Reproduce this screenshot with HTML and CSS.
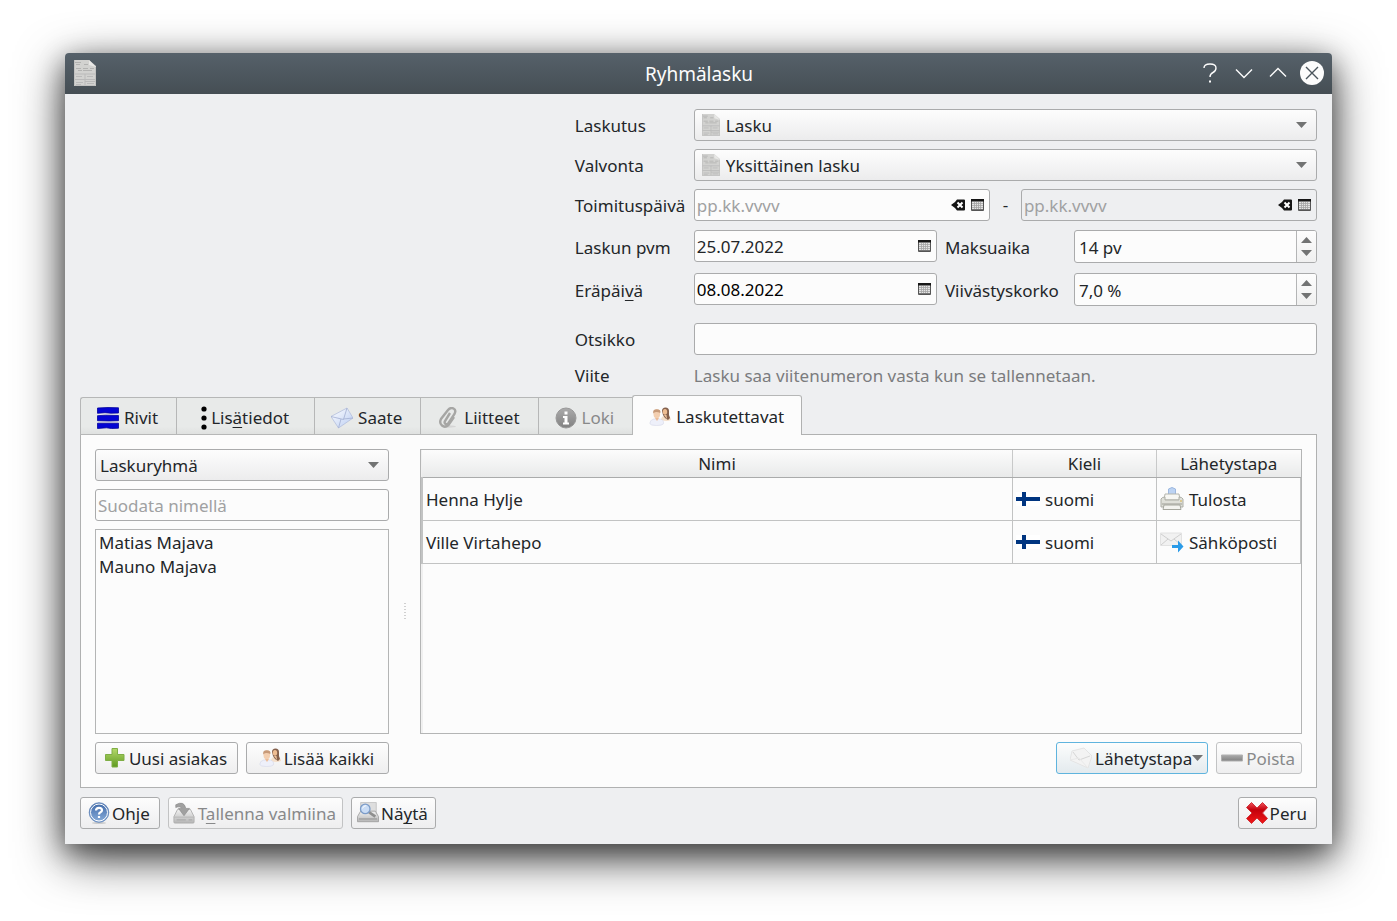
FILE: index.html
```html
<!DOCTYPE html>
<html lang="fi">
<head>
<meta charset="utf-8">
<title>Ryhmälasku</title>
<link rel="stylesheet" href="styles.css">
</head>
<body>
<svg class="defs" aria-hidden="true">
  <defs>
    <linearGradient id="gGreen" x1="0" y1="0" x2="0" y2="1"><stop offset="0" stop-color="#b5d96b"/><stop offset="1" stop-color="#5f9a20"/></linearGradient>
    <linearGradient id="gBlue" x1="0" y1="0" x2="0" y2="1"><stop offset="0" stop-color="#3e68a8"/><stop offset="1" stop-color="#8aaedb"/></linearGradient>
    <linearGradient id="gGrey" x1="0" y1="0" x2="0" y2="1"><stop offset="0" stop-color="#ababab"/><stop offset="1" stop-color="#818181"/></linearGradient>
    <linearGradient id="gRed" x1="0" y1="0" x2="0" y2="1"><stop offset="0" stop-color="#f0525c"/><stop offset=".35" stop-color="#c4000c"/><stop offset="1" stop-color="#f01818"/></linearGradient>
    <linearGradient id="gMail" x1="0" y1="0" x2="1" y2="1"><stop offset="0" stop-color="#ffffff"/><stop offset="1" stop-color="#b9ccf2"/></linearGradient>
    <linearGradient id="gBox" x1="0" y1="0" x2="0" y2="1"><stop offset="0" stop-color="#f2f2f2"/><stop offset="1" stop-color="#b5b5b5"/></linearGradient>
    <symbol id="doc" viewBox="0 0 22 26" preserveAspectRatio="none">
      <path d="M0 0h15l7 6v20H0z" fill="#d2d2d0"/><path d="M15 0v5l7 2z" fill="#e8e8e6"/>
      <path d="M1 2.500h6M2 4.500h4M10 4.500h4M2 8.500h5M4 10.500h4M9 8.500h5M16 8.500h4M9 10.500h9" stroke="#b2b2b1" fill="none"/>
      <path d="M0 14h22M0 19.500h22M11 14v11M11 21.500h10M2 16.500h6M13 16.500h6M2 22.500h7M2 24.500h5M13 23.500h7" stroke="#bababa" fill="none"/>
      <path d="M.5 0v25.500h21V7" stroke="#c2c2c1" fill="none"/>
    </symbol>
    <symbol id="cal" viewBox="0 0 13 12">
      <path d="M.5 .5h12v11H.5z" fill="#e4e4e4" stroke="#555"/><path d="M0 0h13v2.500H0z" fill="#161616"/>
      <path d="M1 4.500h11M1 6.500h11M1 8.500h11M3.500 3v8M5.500 3v8M7.500 3v8M9.500 3v8" stroke="#a4a4a4" stroke-width=".8"/><path d="M1 10.500h11" stroke="#777"/>
    </symbol>
    <symbol id="clear" viewBox="0 0 14 12">
      <path d="M6 .5h7q1 0 1 1v9q0 1-1 1H6L4 9 0 6l4-3z" fill="#151515"/><path d="M6.500 3.500l5 5M11.500 3.500l-5 5" stroke="#fff" stroke-width="2"/>
    </symbol>
    <symbol id="down" viewBox="0 0 11 6"><path d="M0 0h11L5.500 6z" fill="#727373"/></symbol>
    <symbol id="up" viewBox="0 0 11 6"><path d="M0 6h11L5.500 0z" fill="#727373"/></symbol>
    <symbol id="people" viewBox="0 0 22 20">
      <path d="M12 13q0-4 5-5 5 1 5 5-4 2-10 0z" fill="#f4dfca"/>
      <path d="M13 4q0-3.500 3.500-3.500T20 4v4l1 3-2 2-3-2-2-3z" fill="#84604c"/><ellipse cx="16" cy="4.800" rx="2.200" ry="2.900" fill="#eebd92"/><path d="M15 8h2.500l.5 4z" fill="#f0c49c"/>
      <path d="M.8 16.500q0-3.500 4-4.500h6.500q4 1 3 5-1 1.500-7 1.500t-6.500-2z" fill="#eef0fa" stroke="#d5d7e8" stroke-width=".6"/>
      <ellipse cx="7.800" cy="7" rx="3.300" ry="4.400" fill="#f3cfb0"/><path d="M4.300 6.500q-1-4.300 3.500-4.300t3.500 3.800q-3-1.600-5.500-.8z" fill="#c79a78"/><path d="M6 11h4l-2 3z" fill="#edbd98"/>
    </symbol>
    <symbol id="flag" viewBox="0 0 24 14"><path d="M0 0h24v14H0z" fill="#fff"/><path d="M0 5h24v4H0zM6 0h4v14H6z" fill="#003580"/></symbol>
  </defs>
</svg>

<main class="window">
  <header class="titlebar">
    <svg class="app-icon"><use href="#doc"/></svg>
    <h1>Ryhmälasku</h1>
    <div class="controls">
      <button type="button" aria-label="Ohje"><svg viewBox="0 0 24 24"><path d="M6 7q0-4 6-4t6 4q0 3-3 4.500t-3 4.500" /><path d="M12 19.500v2" stroke-width="2"/></svg></button>
      <button type="button" aria-label="Pienennä"><svg viewBox="0 0 24 24"><path d="M4 8.500l8 8 8-8"/></svg></button>
      <button type="button" aria-label="Suurenna"><svg viewBox="0 0 24 24"><path d="M4 15.500l8-8 8 8"/></svg></button>
      <button type="button" aria-label="Sulje" class="close"><svg viewBox="0 0 24 24"><path d="M6 6l12 12M18 6L6 18"/></svg></button>
    </div>
  </header>

  <div class="content">
    <form class="form">
      <label for="laskutus">Laskutus</label>
      <div class="combo with-icon">
        <svg class="lead"><use href="#doc"/></svg>
        <select id="laskutus"><option>Lasku</option></select>
        <svg class="arrow"><use href="#down"/></svg>
      </div>

      <label for="valvonta">Valvonta</label>
      <div class="combo with-icon">
        <svg class="lead"><use href="#doc"/></svg>
        <select id="valvonta"><option>Yksittäinen lasku</option></select>
        <svg class="arrow"><use href="#down"/></svg>
      </div>

      <label for="toimitus">Toimituspäivä</label>
      <div class="range">
        <div class="field"><input id="toimitus" type="text" placeholder="pp.kk.vvvv"><button type="button" aria-label="Tyhjennä"><svg class="clear"><use href="#clear"/></svg></button><button type="button" aria-label="Kalenteri"><svg class="cal"><use href="#cal"/></svg></button></div>
        <span class="dash">-</span>
        <div class="field off"><input type="text" placeholder="pp.kk.vvvv" aria-label="Toimituspäivä päättyy" disabled><button type="button" aria-label="Tyhjennä"><svg class="clear"><use href="#clear"/></svg></button><button type="button" aria-label="Kalenteri"><svg class="cal"><use href="#cal"/></svg></button></div>
      </div>

      <label for="pvm">Laskun pvm</label>
      <div class="pair">
        <div class="field"><input id="pvm" type="text" value="25.07.2022"><button type="button" aria-label="Kalenteri"><svg class="cal"><use href="#cal"/></svg></button></div>
        <label for="maksuaika">Maksuaika</label>
        <div class="spin"><input id="maksuaika" type="text" value="14 pv"><div class="steps"><button type="button" aria-label="Lisää"><svg><use href="#up"/></svg></button><button type="button" aria-label="Vähennä"><svg><use href="#down"/></svg></button></div></div>
      </div>

      <label for="erapaiva">Eräpäi<u>v</u>ä</label>
      <div class="pair">
        <div class="field strong"><input id="erapaiva" type="text" value="08.08.2022"><button type="button" aria-label="Kalenteri"><svg class="cal"><use href="#cal"/></svg></button></div>
        <label for="korko">Viivästyskorko</label>
        <div class="spin"><input id="korko" type="text" value="7,0 %"><div class="steps"><button type="button" aria-label="Lisää"><svg><use href="#up"/></svg></button><button type="button" aria-label="Vähennä"><svg><use href="#down"/></svg></button></div></div>
      </div>

      <label for="otsikko" class="spaced">Otsikko</label>
      <div class="field spaced"><input id="otsikko" type="text"></div>

      <span>Viite</span>
      <output class="hint">Lasku saa viitenumeron vasta kun se tallennetaan.</output>
    </form>

    <div class="tabs" role="tablist">
      <button type="button" role="tab" class="tab"><svg class="i22" viewBox="0 0 22 22"><path d="M.5 1l10.500-.5 10.500.3v5.200L14 6.200 8 5.700.5 6.300zM.5 8.700l8-.5 13 .3v5.200l-9 .3-12-.3zM.5 16.200h21v5l-7 .3-5-.7-9 .7z" fill="#0404d4" stroke="#02029c" stroke-width=".8"/></svg>Rivit</button>
      <button type="button" role="tab" class="tab dots"><svg viewBox="0 0 6 24"><circle cx="3" cy="3" r="2.600"/><circle cx="3" cy="12" r="2.600"/><circle cx="3" cy="21" r="2.600"/></svg><span>Lis<u>ä</u>tiedot</span></button>
      <button type="button" role="tab" class="tab"><svg class="i22" viewBox="0 0 22 22"><path d="M0 9.500L16 1l6 10L7.500 21z" fill="url(#gMail)" stroke="#b4bfdc" stroke-width=".8"/><path d="M0 9.500l12.500 3L16 1M7.500 21l2.500-9M22 11l-9.500 1" fill="none" stroke="#a2aed2" stroke-width=".8"/></svg>Saate</button>
      <button type="button" role="tab" class="tab"><svg class="i22" viewBox="0 0 22 22"><ellipse cx="12" cy="19.500" rx="7" ry="1.200" fill="#d5d5d5"/><path d="M13 6L8 14q-1 2 .5 3t3-1l6-9q2-4-1-5.500T11 3L4 12q-2 4 1 6.500t6.500-.5L17 10" fill="none" stroke="#a6a6a4" stroke-width="2.400"/></svg>Liitteet</button>
      <button type="button" role="tab" class="tab" disabled><svg class="i22" viewBox="0 0 22 22"><circle cx="11" cy="11" r="10" fill="url(#gGrey)" stroke="#999"/><path d="M9.500 4.500h3v3h-3zM8 9h4.500v6.500H14v2H8v-2h1.500V11H8z" fill="#fff"/></svg>Loki</button>
      <button type="button" role="tab" class="tab active" aria-selected="true"><svg class="i22"><use href="#people"/></svg>Laskutettavat</button>
    </div>

    <section class="panel" role="tabpanel">
      <div class="side">
        <div class="combo">
          <select aria-label="Ryhmittely"><option>Laskuryhmä</option></select>
          <svg class="arrow"><use href="#down"/></svg>
        </div>
        <div class="field"><input type="text" placeholder="Suodata nimellä" aria-label="Suodata nimellä"></div>
        <ul class="list"><li>Matias Majava</li><li>Mauno Majava</li></ul>
        <div class="row grow">
          <button type="button" class="btn"><svg class="i22" viewBox="0 0 22 22"><path d="M8 1.500h5.500v6H20v6h-6.500v6.500H8v-6.500H1.500v-6H8z" fill="url(#gGreen)" stroke="#7fae45"/></svg>Uusi asiakas</button>
          <button type="button" class="btn"><svg class="i22"><use href="#people"/></svg>Lisää kaikki</button>
        </div>
      </div>
      <div class="splitter"></div>
      <div class="side">
        <div class="grid">
          <table>
            <colgroup><col><col class="c-std"><col class="c-std"></colgroup>
            <thead><tr><th>Nimi</th><th>Kieli</th><th>Lähetystapa</th></tr></thead>
            <tbody>
              <tr><td>Henna Hylje</td><td><div class="cell"><svg class="flag"><use href="#flag"/></svg>suomi</div></td>
                <td><div class="cell"><svg class="i24" viewBox="0 0 24 24"><path d="M8.500 8V2q3.500-3 7 0v6z" fill="#bcd3f3" stroke="#9db8df"/><path d="M5 7h14l1 6H4z" fill="#f7f7f3" stroke="#b4b5ad"/><path d="M1 12q1-2 4-2v3h14v-3q3 0 4 2v8H1z" fill="#dfe0d9" stroke="#adaea6"/><path d="M2 17h20" stroke="#9c9d95"/><path d="M4 18h16l1 4.500H3z" fill="#f3f3ef" stroke="#a6a79e"/><path d="M20 14h2" stroke="#d8b24a"/></svg>Tulosta</div></td></tr>
              <tr><td>Ville Virtahepo</td><td><div class="cell"><svg class="flag"><use href="#flag"/></svg>suomi</div></td>
                <td><div class="cell"><svg class="i24" viewBox="0 0 24 24"><path d="M.5 3h21v12.500H.5z" fill="#f1f1f1" stroke="#e2e2e2"/><path d="M1 4l10 7 10-7M1 15l7-6M21 15l-7-6" fill="none" stroke="#cfcfcf"/><path d="M12 15h6v-4.500l5.500 6-5.500 6V18h-6z" fill="#2a9be8"/></svg>Sähköposti</div></td></tr>
            </tbody>
          </table>
        </div>
        <div class="row end">
          <button type="button" class="btn focus"><svg class="i22" viewBox="0 0 22 22"><path d="M0 13L2 4 14 1l8 8-4 12z" fill="#f3f3f3" stroke="#e4e4e4"/><path d="M3 5l6 8 11-4" fill="none" stroke="#d6d6d6"/><path d="M0 13l9-2 9 10" fill="none" stroke="#e8e8e8"/></svg>Lähetystapa<svg class="menu-arrow"><use href="#down"/></svg></button>
          <button type="button" class="btn" disabled><svg class="i22" viewBox="0 0 22 22"><path d="M.5 8h21v6H.5z" fill="url(#gGrey)" stroke="#b0b0b0"/></svg>Poista</button>
        </div>
      </div>
    </section>

    <footer class="row actions">
      <button type="button" class="btn tight"><svg class="i22" viewBox="0 0 22 22"><ellipse cx="11" cy="21" rx="7" ry="1" fill="#ccc"/><circle cx="11" cy="10.500" r="9.800" fill="url(#gBlue)" stroke="#5d81b6" stroke-width=".8"/><circle cx="11" cy="10.500" r="8.500" fill="none" stroke="#fff"/><path d="M8 8.500Q8 5.800 11 5.800t3 2.400q0 1.300-1.500 2T11 12.500M11 14v2" fill="none" stroke="#fff" stroke-width="2.200"/></svg>Ohje</button>
      <button type="button" class="btn" disabled><svg class="i22" viewBox="0 0 24 24"><path d="M5 8h14l4 8v6q0 1-1 1H2q-1 0-1-1v-6z" fill="url(#gBox)" stroke="#b0b0b0"/><path d="M1 16.500h22" stroke="#b4b4b4"/><path d="M4 19.500h10M17 19.500h4" stroke="#a4a4a4"/><path d="M3 3q9-5 11 4h4l-6 8-6-8h3.500Q8 4 3 6z" fill="#a0a0a0" stroke="#8d8d8d" stroke-width=".7"/></svg><span>T<u>a</u>llenna valmiina</span></button>
      <button type="button" class="btn narrow"><svg class="i22" viewBox="0 0 24 24"><path d="M4 .5h17v13H4z" fill="#dedede" stroke="#c4c4c4"/><path d="M4 10h16l3.500 6v5.500h-23V16z" fill="url(#gBox)" stroke="#a2a2a2"/><path d="M2 18.500h20" stroke="#8d8d8d"/><path d="M13 11l7 5" stroke="#8f8f8f" stroke-width="3"/><circle cx="9" cy="7.500" r="5.200" fill="#c9dcf5" stroke="#7c9cc8" stroke-width="1.400"/><path d="M6 7q1-3 4-3" stroke="#fff" fill="none"/></svg><span>Nä<u>y</u>tä</span></button>
      <button type="button" class="btn tight last"><svg class="i22" viewBox="0 0 22 22"><path d="M5.500.5L11 6 16.500.5l5 5L16.500 11l5 5.500-5 5L11 16l-5.500 5.500-5-5L6 11 .5 5.500z" fill="url(#gRed)" stroke="#d0323a" stroke-linejoin="round"/></svg>Peru</button>
    </footer>
  </div>
</main>
</body>
</html>
```
FILE: styles.css
```css
* { box-sizing: border-box; }

body {
  margin: 0;
  min-height: 100vh;
  padding: 53px 65px 77px;
  display: flex;
  background: #fff;
  color: #232629;
  font: 17px/24px "Noto Sans", sans-serif;
}

input, select, button { font: inherit; color: inherit; margin: 0; }
button { padding: 0; border: 0; background: none; }
svg { display: block; flex: none; }
u { text-underline-offset: 3px; text-decoration-thickness: 1px; text-decoration-skip-ink: none; }
.defs { position: absolute; width: 0; height: 0; }

.window {
  flex: 1;
  min-width: 0;
  display: flex;
  flex-direction: column;
  background: #eeeff1;
  border-radius: 4px 4px 0 0;
  box-shadow: 0 14px 48px rgba(0, 0, 0, .7), 0 8px 26px rgba(0, 0, 0, .4);
}

/* Title bar */
.titlebar {
  height: 41px;
  padding: 0 8px 2px 9px;
  display: grid;
  grid-template-columns: 1fr auto 1fr;
  align-items: center;
  border-radius: 4px 4px 0 0;
  background: linear-gradient(#56616a, #454e54);
  color: #fcfcfc;
}
.titlebar h1 { margin: 0; padding-top: 2px; font-size: 19px; font-weight: 400; }
.app-icon { width: 22px; height: 26px; }
.controls { display: flex; justify-content: flex-end; gap: 10px; }
.controls svg { width: 24px; height: 24px; fill: none; stroke: #fcfcfc; stroke-width: 1.4; }
.controls .close { border-radius: 50%; background: #fcfcfc; }
.controls .close svg { stroke: #4b555c; }

.content { flex: 1; display: flex; flex-direction: column; padding: 15px; }

/* Invoice form */
.form {
  width: 60%;
  margin-left: auto;
  display: grid;
  grid-template-columns: 111px 1fr;
  gap: 8px;
  align-items: center;
}
.form > label { padding-top: 2px; white-space: nowrap; }
.form .spaced { margin-top: 8px; }
.hint { color: #7b7c7e; line-height: 26px; }

.combo { position: relative; }
.combo select {
  display: block;
  width: 100%;
  height: 32px;
  padding: 2px 24px 0 4px;
  appearance: none;
  border: 1px solid #aaabac;
  border-radius: 3px;
  background: linear-gradient(#fdfdfd, #ececed);
}
.combo.with-icon select { padding-left: 31px; }
.combo .lead { position: absolute; left: 8px; top: 5px; width: 18px; height: 22px; }
.combo .arrow { position: absolute; right: 10px; top: 13px; width: 11px; height: 6px; }

.field {
  height: 32px;
  padding: 0 5px 0 2px;
  display: flex;
  align-items: center;
  gap: 6px;
  border: 1px solid #aaabac;
  border-radius: 3px;
  background: #fcfcfc;
}
.field input, .spin input {
  flex: 1;
  width: 0;
  min-width: 0;
  height: 30px;
  padding: 0;
  border: 0;
  outline: 0;
  background: none;
}
.field input::placeholder { color: #a0a1a2; opacity: 1; }
.field.off { background: #eeeff1; }
.field.strong { color: #000; }
.clear { width: 14px; height: 12px; }
.cal { width: 13px; height: 12px; }

.range, .pair { display: grid; gap: 8px; }
.range { grid-template-columns: 1fr 15px 1fr; align-items: center; }
.dash { text-align: center; }
.pair {
  grid-template-columns: 1fr 121px 1fr;
  align-items: start;
  height: 35px;
  padding-top: 1px;
}
.pair label { line-height: 35px; }

.spin {
  height: 33px;
  display: flex;
  overflow: hidden;
  border: 1px solid #aaabac;
  border-radius: 3px;
  background: #fcfcfc;
}
.spin input { padding-left: 4px; height: 32px; }
.steps {
  width: 20px;
  display: flex;
  flex-direction: column;
  justify-content: center;
  align-items: center;
  gap: 7px;
  border-left: 1px solid #b4b5b6;
  background: linear-gradient(#fdfdfd, #f0f0f0);
}
.steps svg { width: 11px; height: 6px; }

/* Tabs */
.tabs { display: flex; align-items: flex-end; margin-top: 6px; margin-bottom: -1px; z-index: 1; }
.tab {
  height: 38px;
  padding: 3px 18px 0 16px;
  display: flex;
  align-items: center;
  gap: 5px;
  border: 1px solid #b6b7b7;
  border-right: 0;
  background: linear-gradient(#e8eae9 80%, #dfe1e0);
}
.tab:first-child { border-top-left-radius: 3px; }
.tab:disabled { color: #88898a; }
.tab.dots { padding: 3px 25px 0 24px; gap: 4px; }
.tab.dots svg { width: 6px; height: 24px; fill: #000; }
.tab.active {
  height: 40px;
  padding: 2px 17px 0 16px;
  border-right: 1px solid #b0b1b1;
  border-bottom: 0;
  border-radius: 3px 3px 0 0;
  background: #fcfcfc;
}
.i22 { width: 22px; height: 22px; }
.i24 { width: 24px; height: 24px; }

/* Recipients */
.panel {
  flex: 1;
  padding: 14px 14px 13px;
  display: grid;
  grid-template-columns: 1fr 31px 3fr;
  border: 1px solid #b0b1b1;
  background: #fcfcfc;
}
.side { min-width: 0; display: flex; flex-direction: column; gap: 8px; }
.list {
  flex: 1;
  margin: 0;
  padding: 1px 3px;
  list-style: none;
  border: 1px solid #b4b5b5;
}
.splitter {
  align-self: center;
  justify-self: center;
  width: 2px;
  height: 18px;
  background: repeating-linear-gradient(#d0d0d0 0 1px, transparent 1px 3px);
}
.grid { flex: 1; border: 1px solid #b4b5b5; background: linear-gradient(90deg, #f0f0f0 2px, transparent 2px); }
table { width: 100%; border-collapse: collapse; table-layout: fixed; }
.c-std { width: 144px; }
th {
  height: 27px;
  padding: 2px 0 0;
  font-weight: 400;
  border-right: 1px solid #c8c9c9;
  border-bottom: 1px solid #aaabab;
  background: linear-gradient(#fcfcfc, #e9eaea);
}
th:last-child { border-right: 0; }
td {
  height: 43px;
  padding: 2px 3px 0;
  border-right: 1px solid #c2c3c3;
  border-bottom: 1px solid #c2c3c3;
  background: #fcfcfc;
}
td:first-child { border-left: 2px solid #c2c3c3; }
.cell { display: flex; align-items: center; gap: 5px; }
.cell svg { margin-top: -2px; }
.flag { width: 24px; height: 14px; }

/* Buttons */
.row { display: flex; gap: 8px; }
.row.end { justify-content: flex-end; }
.row.grow .btn { flex: 1; }
.btn {
  height: 32px;
  padding: 2px 9px 0 7px;
  display: flex;
  align-items: center;
  justify-content: center;
  gap: 3px;
  white-space: nowrap;
  border: 1px solid #aaabac;
  border-radius: 3px;
  background: linear-gradient(#fdfdfd, #eeeeef);
}
.btn svg { margin-top: -2px; }
.btn:disabled { padding: 2px 6px 0 4px; color: #88898a; border-color: #c2c3c4; }
.btn.tight { gap: 2px; }
.btn.narrow { padding: 2px 7px 0 5px; gap: 2px; }
.btn.focus { padding: 2px 4px 0 13px; border-color: #5fb4de; background: linear-gradient(#fcfdfd, #e3eaee); }
.btn.focus .menu-arrow { margin-left: -3px; }
.menu-arrow { width: 11px; height: 6px; }
.actions { margin-top: 9px; }
.actions .last { margin-left: auto; }
```
